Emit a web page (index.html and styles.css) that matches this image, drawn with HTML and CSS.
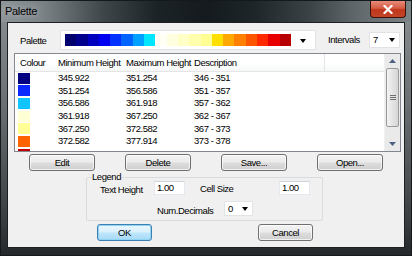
FILE: index.html
```html
<!DOCTYPE html>
<html>
<head>
<meta charset="utf-8">
<link rel="stylesheet" href="styles.css">
</head>
<body>
<div class="window">
  <div class="titlebar">
    <span class="title">Palette</span>
    <div class="close"><svg width="10" height="9" viewBox="0 0 10 9"><path d="M1.5 1 L8.5 8 M8.5 1 L1.5 8" stroke="#fff" stroke-width="2.2" stroke-linecap="square"/></svg></div>
  </div>
  <div class="client">
    <div class="row-palette">
      <span class="lbl-palette">Palette</span>
      <div class="combo combo-palette">
        <div class="bar">
          <i style="background:#00006e"></i><i style="background:#00008c"></i><i style="background:#0000c0"></i><i style="background:#0000f0"></i><i style="background:#0032ff"></i><i style="background:#0064ff"></i><i style="background:#00a0ff"></i><i style="background:#00e6ff"></i><i style="background:#fffff4"></i><i style="background:#ffffe0"></i><i style="background:#ffffc8"></i><i style="background:#ffffae"></i><i style="background:#ffff94"></i><i style="background:#ffe000"></i><i style="background:#ffa800"></i><i style="background:#ff8000"></i><i style="background:#ff5500"></i><i style="background:#ff2a00"></i><i style="background:#e80000"></i><i style="background:#b80000"></i>
        </div>
        <span class="arrow"></span>
      </div>
      <span class="lbl-intervals">Intervals</span>
      <div class="combo combo-small combo-intervals"><span class="val">7</span><span class="arrow"></span></div>
    </div>

    <div class="list">
      <div class="list-body">
        <div class="lrow head">
          <span class="c1">Colour</span><span>Minimum Height</span><span>Maximum Height</span><span class="sep">Description</span><span class="last"></span>
        </div>
        <div class="lrow"><span class="c1"><b class="sw" style="background:#000080"></b></span><span>345.922</span><span>351.254</span><span>346 - 351</span><span></span></div>
        <div class="lrow"><span class="c1"><b class="sw" style="background:#0a28ff"></b></span><span>351.254</span><span>356.586</span><span>351 - 357</span><span></span></div>
        <div class="lrow"><span class="c1"><b class="sw" style="background:#10c4ff"></b></span><span>356.586</span><span>361.918</span><span>357 - 362</span><span></span></div>
        <div class="lrow"><span class="c1"><b class="sw" style="background:#ffffd6"></b></span><span>361.918</span><span>367.250</span><span>362 - 367</span><span></span></div>
        <div class="lrow"><span class="c1"><b class="sw" style="background:#ffff96"></b></span><span>367.250</span><span>372.582</span><span>367 - 373</span><span></span></div>
        <div class="lrow"><span class="c1"><b class="sw" style="background:#ff6400"></b></span><span>372.582</span><span>377.914</span><span>373 - 378</span><span></span></div>
        <div class="lrow"><span class="c1"><b class="sw" style="background:#c00000"></b></span><span></span><span></span><span></span><span></span></div>
      </div>
      <div class="vscroll">
        <div class="sbtn"><svg width="7" height="4" viewBox="0 0 7 4"><path d="M0 4 L3.5 0 L7 4 Z" fill="#4d6185"/></svg></div>
        <div class="strack"><div class="thumb"><span class="grip"></span></div></div>
        <div class="sbtn"><svg width="7" height="4" viewBox="0 0 7 4"><path d="M0 0 L3.5 4 L7 0 Z" fill="#4d6185"/></svg></div>
      </div>
    </div>

    <div class="row-buttons">
      <button class="btn">Edit</button>
      <button class="btn">Delete</button>
      <button class="btn">Save...</button>
      <button class="btn">Open...</button>
    </div>

    <fieldset class="group">
      <legend>Legend</legend>
      <div class="grow grow-a">
        <span class="lbl-th">Text Height</span>
        <span class="input">1.00</span>
        <span class="lbl-cs">Cell Size</span>
        <span class="input">1.00</span>
      </div>
      <div class="grow grow-b">
        <span class="lbl-nd">Num.Decimals</span>
        <div class="combo combo-small combo-dec"><span class="val">0</span><span class="arrow"></span></div>
      </div>
    </fieldset>

    <div class="row-ok">
      <button class="btn btn-default">OK</button>
      <button class="btn">Cancel</button>
    </div>
  </div>
</div>
</body>
</html>
```
FILE: styles.css
```css
* { box-sizing: border-box; }
html, body { margin: 0; padding: 0; }
body {
  width: 412px; height: 256px; overflow: hidden;
  font-family: "Liberation Sans", Arial, sans-serif;
  font-size: 9.5px; letter-spacing: -0.45px; color: #000;
  background: #1a1e20;
}
.window {
  width: 412px; height: 256px;
  display: flex; flex-direction: column;
  border: 1px solid #15191b;
  background: linear-gradient(180deg, #8a9093 0%, #6a7073 40%, #3a3f42 85%, #24282a 100%);
  padding: 0 6px 7px 6px;
}
.titlebar {
  height: 21px; margin: 0 -6px;
  display: flex; align-items: flex-start; justify-content: space-between;
  padding-left: 4px; padding-right: 5px;
  background: linear-gradient(90deg, #8e9599 0%, #7c8387 10%, #3f464a 25%, #1c2327 38%, #141a1e 50%, #1e262a 62%, #3a4246 75%, #5e666a 86%, #7c8488 100%);
}
.title {
  font-size: 11px; line-height: 12px; margin-top: 4px; color: #000;
  letter-spacing: -0.3px;
  text-shadow: 0 0 6px rgba(255,255,255,0.6);
}
.close {
  width: 36px; height: 17px;
  border: 1px solid #3b1208; border-top: none;
  border-radius: 0 0 4px 4px;
  background: linear-gradient(180deg, #e98a78 0%, #d45c44 45%, #c0361c 55%, #c4452a 100%);
  display: flex; align-items: center; justify-content: center;
}
.client {
  flex: 1;
  background: #f0f0f0;
  border: 1px solid #1c2023;
  display: flex; flex-direction: column;
  padding-top: 7px;
}
.row-palette {
  height: 20px; display: flex; align-items: center;
  padding-left: 12px;
}
.lbl-palette { width: 40px; }
.combo {
  background: #fff; border: 1px solid #e2e3e4;
  display: flex; align-items: center; position: relative;
}
.combo-palette { width: 256px; height: 20px; padding-left: 4px; }
.bar { display: flex; width: 226px; height: 12px; }
.bar i { flex: 1; }
.arrow {
  width: 0; height: 0;
  border-left: 3.5px solid transparent; border-right: 3.5px solid transparent;
  border-top: 4px solid #000;
}
.combo-palette .arrow { margin-left: 9px; margin-top: 2px; }
.lbl-intervals { margin-left: 12px; width: 41px; margin-top: -2px; }
.combo-small { height: 16px; padding-left: 3px; justify-content: space-between; padding-right: 4px; }
.combo-intervals { width: 31px; margin-top: -1px; }
.list {
  margin: 3px 0 0 6px; width: 387px; height: 99px;
  border: 1px solid #828790; background: #fff;
  display: flex; overflow: hidden;
}
.list-body { flex: 1; overflow: hidden; }
.lrow {
  display: grid; grid-template-columns: 39px 68px 68px 135px 1fr;
  height: 12.7px; line-height: 12.7px; align-items: start;
}
.lrow span { padding-left: 4px; white-space: nowrap; }
.lrow .c1 { padding-left: 3px; }
.head {
  height: 18px; line-height: 17px;
  background: linear-gradient(180deg, #ffffff 0%, #ffffff 50%, #f6f7f8 100%);
  border-bottom: 1px solid #e5e5e5;
}
.head span { height: 17px; }
.head .c1 { padding-left: 5px; }
.head .sep { border-right: 1px solid #e3e5e8; }
.sw { display: block; width: 12px; height: 11px; margin-top: 0.5px; }
.vscroll {
  width: 16px; background: #eaeaea; border-left: 1px solid #f0f0f0;
  display: flex; flex-direction: column;
}
.sbtn { height: 14px; display: flex; align-items: center; justify-content: center; }
.strack { flex: 1; padding: 0 1px; }
.thumb {
  height: 59px; margin-top: 0px;
  border: 1px solid #9a9a9a; border-radius: 2px;
  background: linear-gradient(90deg, #f3f3f3, #e4e4e4 50%, #d6d6d6);
  display: flex; align-items: center; justify-content: center;
}
.grip {
  width: 6px; height: 5px;
  border-top: 1px solid #6e6e6e; border-bottom: 1px solid #6e6e6e;
  background: linear-gradient(180deg, transparent 1px, #6e6e6e 1px, #6e6e6e 2px, transparent 2px);
}
.row-buttons {
  display: flex; gap: 30px; padding-left: 21px; margin-top: 2px; height: 17px;
}
.btn {
  width: 66px; height: 17px; padding: 0; margin: 0;
  font-family: inherit; font-size: 9.5px; letter-spacing: -0.45px; color: #000;
  border: 1px solid #707070; border-radius: 3px;
  background: linear-gradient(180deg, #f3f3f3 0%, #ebebeb 48%, #dddddd 52%, #cfcfcf 100%);
  box-shadow: inset 0 0 0 1px rgba(255,255,255,0.7);
}
.group {
  margin: 1px 0 0 78px; width: 237px; height: 49px;
  border: 1px solid #d9dcdf; border-radius: 2px;
  padding: 0; min-width: 0;
}
.group legend {
  padding: 0; margin-left: 5px; line-height: 10px; height: 10px;
}
.grow { display: flex; align-items: center; }
.grow-a { margin-top: -1px; height: 14px; padding-left: 13px; }
.lbl-th { width: 54px; margin-top: 3px; }
.lbl-cs { width: 79px; margin-left: 15px; }
.input {
  width: 31px; height: 14px; background: #fff;
  border: 1px solid #e3e9ef; border-top-color: #cfd3d7;
  padding-left: 2px; line-height: 12px;
}
.grow-b { margin-top: 6px; height: 15px; padding-left: 70px; }
.lbl-nd { width: 67px; margin-top: 3px; }
.combo-dec { width: 29px; height: 15px; }
.row-ok {
  display: flex; gap: 106px; padding-left: 89px; margin-top: 3px;
}
.row-ok .btn { width: 55px; }
.btn-default {
  border-color: #3c7fb1;
  background: linear-gradient(180deg, #eaf6fd 0%, #d9f0fc 48%, #bee6fd 52%, #a7d9f5 100%);
  box-shadow: inset 0 0 0 1px #8fd3f5;
}
```
